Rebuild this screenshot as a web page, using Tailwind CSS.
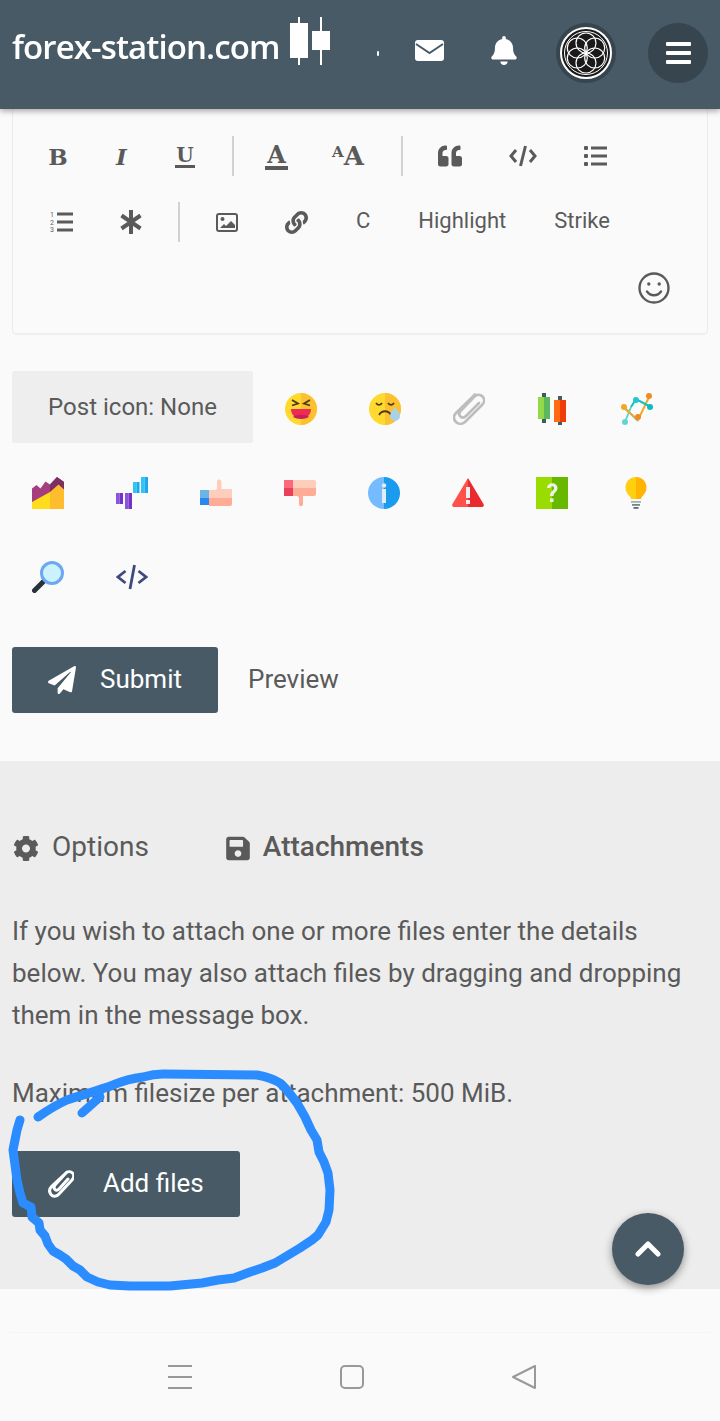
<!DOCTYPE html>
<html lang="en">
<head>
    <meta charset="UTF-8">
    <meta name="viewport" content="width=device-width, initial-scale=1.0">
    <title>Post a reply</title>
    <script src="https://cdn.jsdelivr.net/npm/@tailwindcss/browser@4"></script>
</head>
<body class="bg-[#fafafa] font-['Roboto',sans-serif] text-[#5a5a5a]">
<div class="relative w-[720px] h-[1421px] overflow-hidden">

    <!-- Top bar -->
    <header class="relative z-10 h-[109px] bg-[#485a66] shadow-[0_2px_6px_rgba(0,0,0,0.35)] flex items-start">
        <div class="flex items-start ml-[12px] w-[318px] shrink-0">
            <span class="mt-[25px] w-[278px] font-['Open_Sans',sans-serif] font-semibold text-[33px] leading-[44px] tracking-[-0.9px] text-white whitespace-nowrap blur-[0.5px]">forex-station.com</span>
            <svg class="mt-[17px] shrink-0" width="40" height="48" viewBox="0 0 40 48" fill="#fff"><rect x="0" y="6" width="18" height="35"/><rect x="8" y="0" width="2" height="48"/><rect x="22" y="14" width="18" height="19"/><rect x="30" y="0" width="2" height="48"/></svg>
        </div>
        <span class="mt-[51px] ml-[47px] w-[2px] h-[5px] rounded-full bg-white shrink-0"></span>
        <svg class="mt-[40px] ml-[36px] shrink-0" width="29" height="21" viewBox="0 0 29 21"><rect width="29" height="21" rx="3" fill="#fff"/><path d="M1 4l13.5 9L28 4" fill="none" stroke="#485a66" stroke-width="2"/></svg>
        <svg class="mt-[36px] ml-[47px] shrink-0" width="26" height="29" viewBox="0 0 448 512" fill="#fff"><path d="M224 512c35.32 0 63.97-28.65 63.97-64H160.03c0 35.35 28.65 64 63.97 64zm215.39-149.71c-19.32-20.76-55.47-51.99-55.47-154.29 0-77.7-54.48-139.9-127.94-155.16V32c0-17.67-14.32-32-31.98-32s-31.98 14.33-31.98 32v20.84C118.56 68.1 64.08 130.3 64.08 208c0 102.3-36.15 133.53-55.47 154.29-6 6.45-8.66 14.16-8.61 21.71.11 16.4 12.98 32 32.1 32h383.8c19.12 0 32-15.6 32.1-32 .05-7.55-2.61-15.27-8.61-21.71z"/></svg>
        <div class="mt-[23px] ml-[39px] w-[60px] h-[60px] rounded-full bg-[#36454e] flex items-center justify-center shrink-0">
            <svg width="52" height="52" viewBox="0 0 52 52" fill="none" stroke="#fff">
                <circle cx="26" cy="26" r="25" fill="#1a1a1a" stroke-width="2"/>
                <circle cx="26" cy="26" r="21.5" stroke-width="1"/>
                <g stroke-width="1.2">
                    <circle cx="26" cy="16" r="10"/><circle cx="26" cy="36" r="10"/><circle cx="17.3" cy="21" r="10"/><circle cx="34.7" cy="21" r="10"/><circle cx="17.3" cy="31" r="10"/><circle cx="34.7" cy="31" r="10"/>
                </g>
            </svg>
        </div>
        <div class="mt-[23px] ml-[32px] w-[60px] h-[60px] rounded-full bg-[#36454e] flex flex-col items-center justify-center gap-[5px] shrink-0">
            <span class="w-[25px] h-[4px] rounded-[1px] bg-white"></span>
            <span class="w-[25px] h-[4px] rounded-[1px] bg-white"></span>
            <span class="w-[25px] h-[4px] rounded-[1px] bg-white"></span>
        </div>
    </header>

    <!-- Editor toolbar -->
    <section class="ml-[12px] w-[696px] h-[225px] border border-t-0 border-[#ececec] rounded-b-sm shadow-[0_1px_1px_rgba(0,0,0,0.04)] relative">
        <div class="h-[14px]"></div>
        <div class="flex items-center h-[66px] pl-[13px]">
            <span class="w-[64px] text-center font-['DejaVu_Serif',serif] font-bold text-[23px] leading-none">B</span>
            <span class="w-[63px] text-center font-['DejaVu_Serif',serif] font-bold italic text-[23px] leading-none">I</span>
            <span class="w-[64px] flex justify-center"><span class="font-['DejaVu_Serif',serif] font-bold text-[20px] leading-[20px] border-b-[3px] border-[#5a5a5a] px-[1px]">U</span></span>
            <span class="ml-[15px] w-[2px] h-[40px] bg-[#d2d2d2]"></span>
            <span class="ml-[31px] w-[23px] flex justify-center"><span class="font-['DejaVu_Serif',serif] font-bold text-[24px] leading-[23px] border-b-[4px] border-[#5a5a5a] w-[23px] text-center">A</span></span>
            <span class="ml-[44px] w-[34px] font-['DejaVu_Serif',serif] font-bold leading-none whitespace-nowrap"><span class="text-[15px] align-[8px]">A</span><span class="text-[26px]">A</span></span>
            <span class="ml-[35px] w-[2px] h-[40px] bg-[#d2d2d2]"></span>
            <svg class="ml-[35px]" width="24" height="24" viewBox="0 0 512 512" fill="#5a5a5a"><path d="M464 256h-80v-64c0-35.3 28.7-64 64-64h8c13.3 0 24-10.7 24-24V56c0-13.3-10.7-24-24-24h-8c-88.4 0-160 71.6-160 160v240c0 26.5 21.5 48 48 48h128c26.5 0 48-21.5 48-48V304c0-26.5-21.5-48-48-48zm-288 0H96v-64c0-35.3 28.7-64 64-64h8c13.3 0 24-10.7 24-24V56c0-13.3-10.7-24-24-24h-8C71.6 32 0 103.6 0 192v240c0 26.5 21.5 48 48 48h128c26.5 0 48-21.5 48-48V304c0-26.5-21.5-48-48-48z"/></svg>
            <svg class="ml-[47px]" width="28" height="22" viewBox="0 0 28 22" fill="none" stroke="#5a5a5a" stroke-width="3"><path d="M7 5l-5 6 5 6M21 5l5 6-5 6"/><path d="M16.5 1l-5 20"/></svg>
            <svg class="ml-[47px]" width="23" height="20" viewBox="0 0 23 20" fill="#5a5a5a"><rect width="4" height="4" rx="1"/><rect y="8" width="4" height="4" rx="1"/><rect y="16" width="4" height="4" rx="1"/><rect x="7" y="0.5" width="16" height="3"/><rect x="7" y="8.5" width="16" height="3"/><rect x="7" y="16.5" width="16" height="3"/></svg>
        </div>
        <div class="flex items-center h-[66px] pl-[13px]">
            <svg class="ml-[24px]" width="23" height="22" viewBox="0 0 23 22" fill="#5a5a5a"><rect x="7" y="1.5" width="16" height="3"/><rect x="7" y="9.5" width="16" height="3"/><rect x="7" y="17.5" width="16" height="3"/><text x="0" y="6" font-size="7" font-family="Roboto">1</text><text x="0" y="13.5" font-size="7" font-family="Roboto">2</text><text x="0" y="21" font-size="7" font-family="Roboto">3</text></svg>
            <svg class="ml-[47px]" width="22" height="24" viewBox="0 0 22 24" fill="none" stroke="#5a5a5a" stroke-width="4"><path d="M11 0v24M1.500 5.500l19 13M20.500 5.500l-19 13"/></svg>
            <span class="ml-[36px] w-[2px] h-[40px] bg-[#d2d2d2]"></span>
            <svg class="ml-[36px]" width="22" height="19" viewBox="0 0 22 19"><rect x="1" y="1" width="20" height="17" rx="2" fill="none" stroke="#5a5a5a" stroke-width="2"/><circle cx="6.5" cy="6" r="2" fill="#5a5a5a"/><path d="M4 15l4-4 2 2 5-5 4 4v3z" fill="#5a5a5a"/></svg>
            <svg class="ml-[47px]" width="23" height="23" viewBox="0 0 512 512" fill="#5a5a5a"><path d="M326.612 185.391c59.747 59.809 58.927 155.698.36 214.59-.11.12-.24.25-.36.37l-67.2 67.2c-59.27 59.27-155.699 59.262-214.96 0-59.27-59.26-59.27-155.7 0-214.96l37.106-37.106c9.84-9.84 26.786-3.3 27.294 10.606.648 17.722 3.826 35.527 9.69 52.721 1.986 5.822.567 12.262-3.783 16.612l-13.087 13.087c-28.026 28.026-28.905 73.66-1.155 101.96 28.024 28.579 74.086 28.749 102.325.51l67.2-67.19c28.191-28.191 28.073-73.757 0-101.83-3.701-3.694-7.429-6.564-10.341-8.569a16.037 16.037 0 0 1-6.947-12.606c-.396-10.567 3.348-21.456 11.698-29.806l21.054-21.055c5.521-5.521 14.182-6.199 20.584-1.731a152.482 152.482 0 0 1 20.522 17.197zM467.547 44.449c-59.261-59.262-155.69-59.27-214.96 0l-67.2 67.2c-.12.12-.25.25-.36.37-58.566 58.892-59.387 154.781.36 214.59a152.454 152.454 0 0 0 20.521 17.196c6.402 4.468 15.064 3.789 20.584-1.731l21.054-21.055c8.35-8.35 12.094-19.239 11.698-29.806a16.037 16.037 0 0 0-6.947-12.606c-2.912-2.005-6.64-4.875-10.341-8.569-28.073-28.073-28.191-73.639 0-101.83l67.2-67.19c28.239-28.239 74.3-28.069 102.325.51 27.75 28.3 26.872 73.934-1.155 101.96l-13.087 13.087c-4.35 4.35-5.769 10.79-3.783 16.612 5.864 17.194 9.042 34.999 9.69 52.721.509 13.906 17.454 20.446 27.294 10.606l37.106-37.106c59.271-59.259 59.271-155.699.001-214.959z"/></svg>
            <span class="ml-[48px] pb-[2px] text-[22px] leading-none">C</span>
            <span class="ml-[48px] pb-[2px] text-[22px] leading-none">Highlight</span>
            <span class="ml-[48px] pb-[2px] text-[22px] leading-none">Strike</span>
        </div>
        <div class="flex justify-end pr-[37px] pt-[17px]">
            <svg width="32" height="32" viewBox="0 0 32 32" fill="none" stroke="#5a5a5a" stroke-width="2.4"><circle cx="16" cy="16" r="14.5"/><path d="M9 19.5c3.5 5 10.500 5 14 0" stroke-linecap="round"/><circle cx="10.800" cy="12" r="1.700" fill="#5a5a5a" stroke="none"/><circle cx="21.200" cy="12" r="1.700" fill="#5a5a5a" stroke="none"/></svg>
        </div>
    </section>

    <!-- Post icons -->
    <section class="mt-[33px] pl-[6px] flex flex-wrap">
        <div class="ml-[6px] mr-[6px] mt-[4px] w-[241px] h-[72px] rounded-[3px] bg-[#eeeeee] flex items-center justify-center text-[24px] leading-none">Post icon: None</div>
        <div class="w-[84px] h-[84px] flex items-center justify-center">
            <svg width="32" height="32" viewBox="0 0 32 32"><circle cx="16" cy="16" r="16" fill="#ffd92e"/><path d="M16 0a16 16 0 0 1 0 32z" fill="#fdc02f"/><path d="M6 16h20c0 6-4.500 9.500-10 9.500S6 22 6 16z" fill="#ee2b55"/><path d="M8 24c2-3 14-3 16 0-4.500 2.500-11.500 2.500-16 0z" fill="#c81e5a"/><path d="M7 7l6 3.500-6 2M25 7l-6 3.500 6 2" fill="none" stroke="#4a3a20" stroke-width="1.800"/></svg>
        </div>
        <div class="w-[84px] h-[84px] flex items-center justify-center">
            <svg width="32" height="32" viewBox="0 0 32 32"><circle cx="16" cy="16" r="16" fill="#ffd92e"/><path d="M16 0a16 16 0 0 1 0 32z" fill="#fdc02f"/><path d="M7 10c2 2.500 4 2.500 6 0M19 10c2 2.500 4 2.500 6 0M10 22c3-5 9-5 12 0" fill="none" stroke="#4a3a20" stroke-width="1.800"/><path d="M26 14c2.500 3.500 5 6 5 9a5 5 0 0 1-10 0c0-3 2.500-5.500 5-9z" fill="#a9d2ea"/></svg>
        </div>
        <div class="w-[84px] h-[84px] flex items-center justify-center">
            <svg width="32" height="32" viewBox="0 0 32 32" fill="none" stroke="#bdbdbd" stroke-width="2.600" stroke-linecap="round"><path d="M22 1.500L3.500 19.500c-3.500 3.500-3 7 -.5 9.500s6.500 2.500 9.500-.5L29 12c3-3 2.500-6.500.5-8.500s-5.500-2.500-8 0L7.500 18c-2 2-1.500 4 0 5.500s3.500 1.500 5.500-.5L26 10"/></svg>
        </div>
        <div class="w-[84px] h-[84px] flex items-center justify-center">
            <svg width="32" height="32" viewBox="0 0 32 32"><rect x="5" y="0" width="4" height="30" fill="#3f5a5c"/><rect x="21" y="3" width="4" height="29" fill="#465a63"/><rect x="1" y="4" width="6" height="22" fill="#94d94a"/><rect x="7" y="4" width="6" height="22" fill="#5cb85c"/><rect x="17" y="7" width="6" height="22" fill="#ff6a13"/><rect x="23" y="7" width="6" height="22" fill="#ee3d06"/></svg>
        </div>
        <div class="w-[84px] h-[84px] flex items-center justify-center">
            <svg width="32" height="32" viewBox="0 0 32 32"><path d="M4 29L10 14M4 15l13 13" fill="none" stroke="#5fd6d6" stroke-width="2"/><path d="M3 15l14 12 12-25" fill="none" stroke="#f5a623" stroke-width="2"/><path d="M10 14l5-8 13 7" fill="none" stroke="#10c0c8" stroke-width="2"/><circle cx="3" cy="14" r="3" fill="#f5a623"/><circle cx="17" cy="24" r="3" fill="#f08a24"/><circle cx="28" cy="3" r="3" fill="#f08a24"/><circle cx="4" cy="29" r="3" fill="#5fd6d6"/><circle cx="15" cy="7" r="3" fill="#1fc8cc"/><circle cx="29" cy="14" r="3" fill="#10b8c0"/></svg>
        </div>
        <div class="w-[84px] h-[84px] flex items-center justify-center">
            <svg width="32" height="32" viewBox="0 0 32 32"><path d="M0 11.500L4.500 8l4 3.500 5-7L18 7.500 25 0l7 5v20H0z" fill="#a63d7c"/><path d="M18 7.500L25 0l7 5v20H18z" fill="#7d2e62"/><path d="M0 25l18-10v17H0z" fill="#ffdc1c"/><path d="M18 15l8.500-7.500L32 12.500V32H18z" fill="#ffbc2d"/></svg>
        </div>
        <div class="w-[84px] h-[84px] flex items-center justify-center">
            <svg width="32" height="32" viewBox="0 0 32 32"><rect x="0" y="16" width="3.500" height="11" fill="#8a55dd"/><rect x="3.500" y="16" width="3.500" height="11" fill="#7432c8"/><rect x="9" y="16" width="3.500" height="16" fill="#8a55dd"/><rect x="12.500" y="16" width="3.500" height="16" fill="#7432c8"/><rect x="17" y="5" width="3.500" height="11" fill="#33c4f5"/><rect x="20.500" y="5" width="3" height="11" fill="#1aa8ee"/><rect x="25" y="0" width="3.500" height="16" fill="#33c4f5"/><rect x="28.500" y="0" width="3.500" height="16" fill="#1aa8ee"/></svg>
        </div>
        <div class="w-[84px] h-[84px] flex items-center justify-center">
            <svg width="32" height="32" viewBox="0 0 32 32"><rect x="0" y="13" width="9" height="8" fill="#6cb3e8"/><rect x="0" y="21" width="9" height="7" fill="#2a86f0"/><path d="M9 13h6c1 0 2-1 2-2V4c0-2 4-2 4.500 1v7H31c1 0 1 1 1 2v7H9z" fill="#ffcdbb"/><path d="M9 21h23v6c0 1-1 2-2 2H9z" fill="#ffac96"/></svg>
        </div>
        <div class="w-[84px] h-[84px] flex items-center justify-center">
            <svg width="32" height="32" viewBox="0 0 32 32"><rect x="0" y="3" width="9" height="8" fill="#fb6a7c"/><rect x="0" y="11" width="9" height="8" fill="#e9405c"/><path d="M9 3h21c1 0 2 1 2 2v6H9z" fill="#ffcdbb"/><path d="M9 11h23v6c0 1-1 2-2 2h-11v8c0 3-4 3-4 0v-6c0-1-1-2-2-2H9z" fill="#ffac96"/></svg>
        </div>
        <div class="w-[84px] h-[84px] flex items-center justify-center">
            <svg width="32" height="32" viewBox="0 0 32 32"><path d="M16 0a16 16 0 0 0 0 32z" fill="#74bbff"/><path d="M16 0a16 16 0 0 1 0 32z" fill="#1b9bee"/><rect x="14" y="12" width="4" height="14" fill="#e6ebef"/><circle cx="16" cy="8.500" r="2.200" fill="#e6ebef"/></svg>
        </div>
        <div class="w-[84px] h-[84px] flex items-center justify-center">
            <svg width="32" height="32" viewBox="0 0 32 32"><path d="M16 1L.5 27c-.8 1.500 0 3 2 3H16z" fill="#ff5049"/><path d="M16 1l15.500 26c.8 1.500 0 3-2 3H16z" fill="#ea2a2f"/><rect x="14" y="10" width="4" height="11" fill="#eceff1"/><rect x="14" y="23" width="4" height="4" fill="#eceff1"/></svg>
        </div>
        <div class="w-[84px] h-[84px] flex items-center justify-center">
            <svg width="32" height="32" viewBox="0 0 32 32"><rect x="0" y="0" width="16" height="32" fill="#9bdc00"/><rect x="16" y="0" width="16" height="32" fill="#69b800"/><path d="M11 11c0-6.500 10.500-6.500 10.500 0 0 4-4 4.500-4 8h-3.500c0-5 4-5 4-8 0-2.500-3.500-2.500-3.500 0z" fill="#eef1e8"/><rect x="14" y="21.500" width="3.500" height="3.500" fill="#eef1e8"/></svg>
        </div>
        <div class="w-[84px] h-[84px] flex items-center justify-center">
            <svg width="32" height="32" viewBox="0 0 32 32"><path d="M16 0C10 0 5.500 4.500 5.500 10.500c0 4 2 6.500 4 8.500 1 1 1.500 2 1.500 3h5z" fill="#ffcf10"/><path d="M16 0c6 0 10.500 4.500 10.500 10.500 0 4-2 6.500-4 8.500-1 1-1.500 2-1.500 3h-5z" fill="#ffb400"/><rect x="11" y="24" width="10" height="1.800" fill="#a8b0b5"/><rect x="12" y="27" width="8" height="1.800" fill="#77858c"/><rect x="13.500" y="30" width="5" height="1.800" fill="#5f6d75"/></svg>
        </div>
        <div class="w-[84px] h-[84px] flex items-center justify-center">
            <svg width="32" height="32" viewBox="0 0 32 32"><path d="M2.500 29.500l8.500-8.500" stroke="#263238" stroke-width="5" stroke-linecap="round"/><circle cx="20" cy="12" r="10.500" fill="#cdf2ff" stroke="#6ca8f2" stroke-width="3"/></svg>
        </div>
        <div class="w-[84px] h-[84px] flex items-center justify-center">
            <svg width="32" height="26" viewBox="0 0 32 26" fill="none" stroke="#3f4a7d" stroke-width="2.800"><path d="M9.500 7L2 13l7.500 6M22.500 7L30 13l-7.500 6M18.500 1l-4.500 24"/></svg>
        </div>
    </section>

    <!-- Submit / Preview -->
    <div class="mt-[28px] ml-[12px] h-[66px] flex items-center">
        <button class="w-[206px] h-[66px] rounded-[3px] bg-[#485a66] flex items-center text-white text-[26px] pl-[36px]">
            <svg width="28" height="28" viewBox="0 0 512 512" fill="#fff"><path d="M476 3.200L12.500 270.600c-18.100 10.400-15.800 35.600 2.200 43.200L121 358.400l287.300-253.200c5.500-4.900 13.300 2.600 8.600 8.300L176 407v80.500c0 23.600 28.500 32.900 42.500 15.800L282 426l124.600 52.200c14.200 6 30.400-2.900 33-18.200l72-432C515 7.800 493.300-6.800 476 3.200z"/></svg>
            <span class="ml-[24px] pb-[2px]">Submit</span>
        </button>
        <span class="ml-[30px] pb-[2px] text-[26px]">Preview</span>
    </div>

    <!-- Options / Attachments panel -->
    <section class="mt-[48px] h-[528px] bg-[#ededed] px-[12px] pt-[68px]">
        <div class="flex items-center h-[38px]">
            <svg class="ml-[1px]" width="26" height="27" viewBox="0 0 512 512" fill="#5a5a5a"><path d="M487.400 315.700l-42.600-24.600c4.300-23.200 4.300-47 0-70.200l42.600-24.600c4.900-2.800 7.100-8.600 5.500-14-11.100-35.600-30-67.800-54.700-94.600-3.800-4.100-10-5.100-14.800-2.300L380.800 110c-17.900-15.400-38.500-27.300-60.800-35.100V25.800c0-5.600-3.900-10.500-9.400-11.700-36.700-8.200-74.300-7.800-109.200 0-5.500 1.200-9.400 6.100-9.400 11.700V75c-22.200 7.900-42.800 19.800-60.800 35.100L88.700 85.500c-4.900-2.800-11-1.900-14.800 2.300-24.700 26.700-43.600 58.900-54.700 94.600-1.700 5.400.6 11.200 5.500 14L67.300 221c-4.300 23.200-4.300 47 0 70.200l-42.600 24.600c-4.900 2.800-7.100 8.600-5.500 14 11.100 35.600 30 67.800 54.700 94.600 3.800 4.100 10 5.100 14.800 2.300l42.600-24.600c17.900 15.400 38.500 27.300 60.800 35.100v49.200c0 5.600 3.900 10.500 9.400 11.700 36.700 8.200 74.300 7.800 109.200 0 5.500-1.200 9.400-6.100 9.400-11.700v-49.200c22.200-7.900 42.800-19.800 60.800-35.100l42.600 24.600c4.900 2.800 11 1.900 14.800-2.300 24.700-26.700 43.600-58.900 54.700-94.600 1.500-5.500-.7-11.300-5.600-14.100zM256 336c-44.100 0-80-35.900-80-80s35.900-80 80-80 80 35.900 80 80-35.900 80-80 80z"/></svg>
            <span class="ml-[13px] text-[28px] leading-none -mt-[3px]">Options</span>
            <svg class="ml-[77px]" width="24" height="27" viewBox="0 0 448 512" fill="#5a5a5a"><path d="M433.941 129.941l-83.882-83.882A48 48 0 0 0 316.118 32H48C21.490 32 0 53.490 0 80v352c0 26.510 21.490 48 48 48h352c26.510 0 48-21.490 48-48V163.882a48 48 0 0 0-14.059-33.941zM224 416c-35.346 0-64-28.654-64-64 0-35.346 28.654-64 64-64s64 28.654 64 64c0 35.346-28.654 64-64 64zm96-304.520V212c0 6.627-5.373 12-12 12H76c-6.627 0-12-5.373-12-12V108c0-6.627 5.373-12 12-12h228.520c3.183 0 6.235 1.264 8.485 3.515l3.480 3.480A11.996 11.996 0 0 1 320 111.480z"/></svg>
            <span class="ml-[13px] text-[28px] leading-none font-medium -mt-[3px]">Attachments</span>
        </div>
        <p class="mt-[43px] text-[26px] leading-[42px]">If you wish to attach one or more files enter the details below. You may also attach files by dragging and dropping them in the message box.</p>
        <p class="mt-[36px] text-[26px] leading-[42px]">Maximum filesize per attachment: 500 MiB.</p>
        <button class="mt-[37px] w-[228px] h-[66px] rounded-[3px] bg-[#485a66] flex items-center text-white text-[26px] pl-[36px]">
            <svg width="26" height="28" viewBox="0 0 26 28" fill="none" stroke="#fff" stroke-width="3" stroke-linecap="round"><path d="M19 2L4 16c-3 3-3 6-1 8.500s5.500 2.500 8-.5L24 10c2.500-3 2-5.500.5-7S20 1 18 3L7 15c-1.500 2-1 3.500 0 4.500s2.500 1 4-.5l9-10"/></svg>
            <span class="ml-[29px] pb-[2px]">Add files</span>
        </button>
    </section>

    <!-- Android nav bar -->
    <nav class="mt-[43px] mx-[10px] border-t border-[#f5f5f5] h-[89px] flex items-start">
        <div class="ml-[158px] mt-[32px] w-[24px] h-[24px] flex flex-col justify-between">
            <span class="h-[2px] bg-[#999]"></span>
            <span class="h-[2px] bg-[#999]"></span>
            <span class="h-[2px] bg-[#999]"></span>
        </div>
        <span class="ml-[148px] mt-[32px] w-[24px] h-[24px] rounded-[5px] border-2 border-[#999]"></span>
        <svg class="ml-[148px] mt-[32px]" width="24" height="24" viewBox="0 0 24 24" fill="none" stroke="#999" stroke-width="2" stroke-linejoin="round"><path d="M23 1v22L1 12z"/></svg>
    </nav>

    <!-- Back to top -->
    <div class="absolute left-[612px] top-[1213px] w-[72px] h-[72px] rounded-full bg-[#485a66] shadow-[0_3px_8px_rgba(0,0,0,0.4)] flex items-center justify-center">
        <svg width="26" height="16" viewBox="0 0 26 16" fill="none" stroke="#fff" stroke-width="5" stroke-linecap="round" stroke-linejoin="round"><path d="M3 13L13 3l10 10"/></svg>
    </div>

    <!-- Hand-drawn annotation -->
    <svg class="absolute left-0 top-0 pointer-events-none" width="720" height="1421" viewBox="0 0 720 1421" fill="none" stroke="#2a8cff" stroke-width="9" stroke-linecap="round" stroke-linejoin="round">
        <path d="M38 1117C48 1110 58 1104 67 1100C85 1094 100 1090 113 1085C125 1080 135 1078 143 1077C150 1075 156 1074 163 1074L257 1075C268 1077 275 1080 280 1083C288 1090 292 1097 297 1103L305 1117L311 1130L317 1140L319 1152L324 1162L328 1173L330 1190L329 1210L326 1222L318 1235L312 1240L300 1248L290 1254L275 1263L262 1268L250 1272L234 1278L218 1280L202 1283L170 1286L130 1286L110 1285L98 1282L87 1277L80 1270L73 1266L66 1259L60 1255L53 1251L48 1244L45 1236L40 1230L39 1223L32 1217L31 1207L23 1203L20 1193L17 1180L15 1165L13 1150L15 1140L17 1130L20 1120"/>
        <path d="M82 1113L100 1097"/>
    </svg>
</div>
</body>
</html>
